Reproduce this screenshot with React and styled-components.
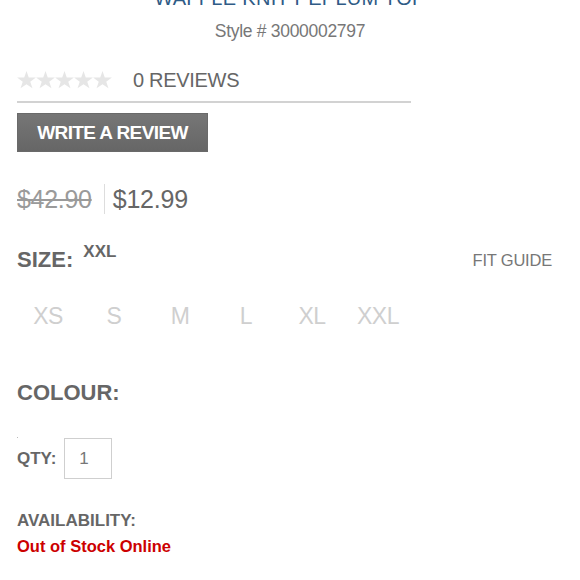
import React from 'react'
import styled, { createGlobalStyle } from 'styled-components';

const GlobalStyle = createGlobalStyle`
  body {
    margin: 0;
    background: #fff;
    font-family: "Liberation Sans", Arial, sans-serif;
    color: #666;
  }
`;

const sizes = ['XS', 'S', 'M', 'L', 'XL', 'XXL'];

const Star = () => (
    <svg width="19" height="18" viewBox="0 0 24 23">
        <path d="M12 0l2.9 8.3H24l-7.2 5.3 2.8 8.6L12 16.9l-7.6 5.3 2.8-8.6L0 8.3h9.1z" fill="#e6e6e6" />
    </svg>
);

const App = () => {
    return (
        <PageStyled>
            <GlobalStyle />
            <div className="head">
                <h1>WAFFLE KNIT PEPLUM TOP</h1>
                <p className="style">Style # 3000002797</p>
            </div>
            <div className="reviews">
                <div className="stars">
                    {[0, 1, 2, 3, 4].map((i) => <Star key={i} />)}
                </div>
                <span>0 REVIEWS</span>
            </div>
            <button className="write">WRITE A REVIEW</button>
            <div className="price">
                <s>$42.90</s>
                <span>$12.99</span>
            </div>
            <div className="size-head">
                <h4>SIZE: <sup>XXL</sup></h4>
                <a>FIT GUIDE</a>
            </div>
            <div className="sizes">
                {sizes.map((s) => <div className="size" key={s}>{s}</div>)}
            </div>
            <h4 className="colour">COLOUR:</h4>
            <i className="dot" />
            <div className="qty">
                <h5>QTY:</h5>
                <div className="box">1</div>
            </div>
            <div className="avail">
                <h5>AVAILABILITY:</h5>
                <p>Out of Stock Online</p>
            </div>
        </PageStyled>
    )
}

//styled
const PageStyled = styled.main`
padding: 0 28px 0 17px;
.head{
    text-align: center;
    margin-left: -17px;
    margin-right: -28px;
    h1{
        margin: -12px 0 0 0;
        font-size: 20px;
        line-height: 20px;
        font-weight: 400;
        color: #2f5b86;
        letter-spacing: 0.3px;
    }
    .style{
        margin: 13px 0 0 0;
        font-size: 17.5px;
        line-height: 20px;
        color: #777;
        letter-spacing: -0.3px;
    }
}
.reviews{
    width: 394px;
    display: flex;
    align-items: center;
    gap: 21px;
    margin-top: 27px;
    padding-bottom: 9px;
    border-bottom: 2px solid #d2d2d2;
    .stars{
        display: flex;
    }
    span{
        font-size: 20px;
        line-height: 24px;
        color: #666;
        letter-spacing: -0.3px;
    }
}
.write{
    display: block;
    margin-top: 10px;
    width: 191px;
    height: 39px;
    border: 1px solid #6a6a6a;
    background: linear-gradient(#767676, #666);
    color: #fff;
    font-family: "Liberation Sans", Arial, sans-serif;
    font-size: 19px;
    font-weight: 700;
    letter-spacing: -0.6px;
    padding: 0;
}
.price{
    display: flex;
    align-items: center;
    margin-top: 32px;
    font-size: 25px;
    line-height: 30px;
    s{
        color: #9a9a9a;
        padding-right: 12px;
        border-right: 1px solid #ddd;
        letter-spacing: -0.3px;
    }
    span{
        color: #666;
        padding-left: 8px;
        letter-spacing: -0.2px;
    }
}
.size-head{
    display: flex;
    justify-content: space-between;
    align-items: flex-start;
    margin-top: 33px;
    h4{
        margin: 0;
        font-size: 22px;
        line-height: 26px;
        font-weight: 700;
        color: #666;
        sup{
            font-size: 17px;
            vertical-align: 0;
            position: relative;
            top: -10px;
            margin-left: 4px;
        }
    }
    a{
        margin-top: 3px;
        font-size: 16.5px;
        line-height: 20px;
        color: #777;
        letter-spacing: -0.2px;
    }
}
.sizes{
    display: grid;
    grid-template-columns: repeat(6, 66px);
    margin-left: -2px;
    margin-top: 27px;
    .size{
        text-align: center;
        font-size: 23px;
        line-height: 28px;
        color: #cfcfcf;
        letter-spacing: -0.5px;
    }
}
.colour{
    margin: 50px 0 0 0;
    font-size: 22px;
    line-height: 26px;
    font-weight: 700;
    color: #666;
}
.dot{
    display: block;
    width: 1px;
    height: 1px;
    margin-top: 31px;
    background: #bbb;
}
.qty{
    display: flex;
    align-items: center;
    gap: 8px;
    h5{
        margin: 0;
        font-size: 17px;
        font-weight: 700;
        color: #666;
    }
    .box{
        width: 46px;
        height: 39px;
        border: 1px solid #cfcfcf;
        display: flex;
        align-items: center;
        font-size: 17px;
        color: #777;
        text-indent: 14px;
    }
}
.avail{
    margin-top: 32px;
    h5{
        margin: 0;
        font-size: 17px;
        line-height: 20px;
        font-weight: 700;
        color: #666;
    }
    p{
        margin: 5px 0 0 0;
        font-size: 16.5px;
        line-height: 20px;
        font-weight: 700;
        color: #cc0000;
    }
}
`;
export default App
